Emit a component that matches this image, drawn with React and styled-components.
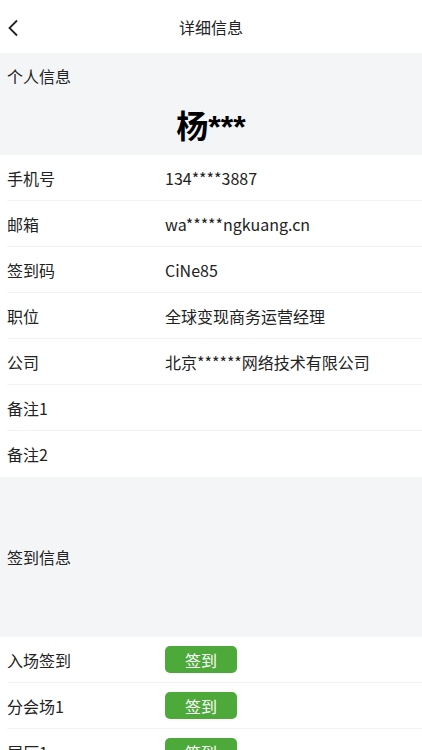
import React from "react";
import styled, { createGlobalStyle } from "styled-components";

const GlobalStyle = createGlobalStyle`
  body {
    margin: 0;
    background: #fff;
    font-family: "Noto Sans CJK SC", "Open Sans", sans-serif;
    color: #222;
  }
`;

const Page = styled.div`
  width: 422px;
  height: 750px;
  overflow: hidden;
  background: #fff;
`;

const Header = styled.div`
  height: 53px;
  display: flex;
  align-items: center;
  justify-content: center;
  position: relative;
  font-size: 16px;
  color: #222;
`;

const Back = styled.div`
  position: absolute;
  left: 7px;
  top: 18px;
  width: 14px;
  height: 18px;
`;

const GraySection = styled.div`
  background: #f4f5f7;
  height: ${(p) => p.h}px;
  display: flex;
  flex-direction: column;
  justify-content: ${(p) => (p.center ? "center" : "flex-start")};
`;

const SectionTitle = styled.div`
  font-size: 16px;
  padding: 0 7px;
  line-height: 46px;
`;

const Name = styled.div`
  text-align: center;
  font-size: 32px;
  font-weight: 700;
  color: #000;
  line-height: 56px;
  font-family: "Liberation Sans", "Noto Sans CJK SC", sans-serif;
`;

const Row = styled.div`
  height: 46px;
  margin-left: 7px;
  display: flex;
  align-items: center;
  border-bottom: ${(p) => (p.last ? "none" : "1px solid #f3f3f3")};
  box-sizing: border-box;
  font-size: 16px;
`;

const Label = styled.div`
  width: 158px;
`;

const Value = styled.div`
  font-family: "Noto Sans CJK SC", sans-serif;
`;

const SignButton = styled.button`
  width: 72px;
  height: 27px;
  border: none;
  border-radius: 5px;
  background: #4ea93b;
  color: #fff;
  font-size: 16px;
  font-family: "Noto Sans CJK SC", sans-serif;
  padding: 0;
  display: flex;
  align-items: center;
  justify-content: center;
`;

const info = [
  ["手机号", "134****3887"],
  ["邮箱", "wa*****ngkuang.cn"],
  ["签到码", "CiNe85"],
  ["职位", "全球变现商务运营经理"],
  ["公司", "北京******网络技术有限公司"],
  ["备注1", ""],
  ["备注2", ""],
];

const checks = ["入场签到", "分会场1", "展厅1"];

export default function App() {
  return (
    <Page>
      <GlobalStyle />
      <Header>
        <Back>
          <svg width="14" height="18" viewBox="0 0 14 18">
            <path d="M10 1.5 L2.5 9 L10 16.5" fill="none" stroke="#222" strokeWidth="1.8" />
          </svg>
        </Back>
        详细信息
      </Header>
      <GraySection h={102}>
        <SectionTitle>个人信息</SectionTitle>
        <Name>杨***</Name>
      </GraySection>
      {info.map(([k, v], i) => (
        <Row key={k} last={i === info.length - 1}>
          <Label>{k}</Label>
          <Value>{v}</Value>
        </Row>
      ))}
      <GraySection h={160} center>
        <SectionTitle>签到信息</SectionTitle>
      </GraySection>
      {checks.map((k) => (
        <Row key={k}>
          <Label>{k}</Label>
          <SignButton>签到</SignButton>
        </Row>
      ))}
    </Page>
  );
}
